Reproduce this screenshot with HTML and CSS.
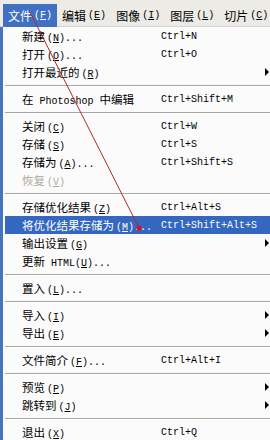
FILE: index.html
```html
<!DOCTYPE html>
<html lang="zh-CN">
<head>
    <meta charset="UTF-8">
    <title>文件菜单</title>
    <link rel="stylesheet" href="styles.css">
</head>
<body>
    <div class="menubar">
        <span class="top active">文件<span class="k">(<u>F</u>)</span></span>
        <span class="top">编辑<span class="k">(<u>E</u>)</span></span>
        <span class="top">图像<span class="k">(<u>I</u>)</span></span>
        <span class="top">图层<span class="k">(<u>L</u>)</span></span>
        <span class="top">切片<span class="k">(<u>C</u>)</span></span>
    </div>

    <div class="menu">
        <div class="row"><span class="label">新建<span class="k">(<u>N</u>)...</span></span><span class="key">Ctrl+N</span></div>
        <div class="row"><span class="label">打开<span class="k">(<u>O</u>)...</span></span><span class="key">Ctrl+O</span></div>
        <div class="row sub"><span class="label">打开最近的<span class="k">(<u>R</u>)</span></span></div>
        <div class="sep"></div>
        <div class="row"><span class="label">在<span class="k wide">Photoshop</span>中编辑</span><span class="key">Ctrl+Shift+M</span></div>
        <div class="sep"></div>
        <div class="row"><span class="label">关闭<span class="k">(<u>C</u>)</span></span><span class="key">Ctrl+W</span></div>
        <div class="row"><span class="label">存储<span class="k">(<u>S</u>)</span></span><span class="key">Ctrl+S</span></div>
        <div class="row"><span class="label">存储为<span class="k">(<u>A</u>)...</span></span><span class="key">Ctrl+Shift+S</span></div>
        <div class="row disabled"><span class="label">恢复<span class="k">(<u>V</u>)</span></span></div>
        <div class="sep"></div>
        <div class="row"><span class="label">存储优化结果<span class="k">(<u>Z</u>)</span></span><span class="key">Ctrl+Alt+S</span></div>
        <div class="row selected"><span class="label">将优化结果存储为<span class="k">(<u>M</u>)...</span></span><span class="key">Ctrl+Shift+Alt+S</span></div>
        <div class="row sub"><span class="label">输出设置<span class="k">(<u>G</u>)</span></span></div>
        <div class="row"><span class="label">更新<span class="k wide">HTML(<u>U</u>)...</span></span></div>
        <div class="sep"></div>
        <div class="row"><span class="label">置入<span class="k">(<u>L</u>)...</span></span></div>
        <div class="sep"></div>
        <div class="row sub"><span class="label">导入<span class="k">(<u>I</u>)</span></span></div>
        <div class="row sub"><span class="label">导出<span class="k">(<u>E</u>)</span></span></div>
        <div class="sep"></div>
        <div class="row"><span class="label">文件简介<span class="k">(<u>F</u>)...</span></span><span class="key">Ctrl+Alt+I</span></div>
        <div class="sep"></div>
        <div class="row sub"><span class="label">预览<span class="k">(<u>P</u>)</span></span></div>
        <div class="row sub"><span class="label">跳转到<span class="k">(<u>J</u>)</span></span></div>
        <div class="sep"></div>
        <div class="row"><span class="label">退出<span class="k">(<u>X</u>)</span></span><span class="key">Ctrl+Q</span></div>
    </div>

    <!-- hand drawn pointer over the screenshot -->
    <svg class="pointer" width="270" height="440" viewBox="0 0 270 440">
        <line x1="30" y1="12" x2="139" y2="228" stroke="#b02a2a" stroke-width="1"/>
        <circle cx="139" cy="228" r="2.5" fill="#e01010"/>
    </svg>
</body>
</html>
```

FILE: styles.css
```css
body {
    margin: 0;
    width: 270px;
    height: 440px;
    overflow: hidden;
    position: relative;
    background-color: #fbfbfb;
    font-family: "Noto Sans CJK SC", sans-serif;
    color: #000;
}

.menubar {
    display: flex;
    height: 27px;
    padding: 4px 0 0 3px;
    box-sizing: border-box;
    background-color: #ecebe6;
    border-bottom: 1px solid #d8d6cc;
    font-size: 12px;
}

.top {
    display: flex;
    align-items: center;
    height: 23px;
    padding: 0 5px;
    white-space: nowrap;
}

.top.active {
    background-color: #3f70c2;
    color: #fff;
}

/* mnemonic / latin parts use a half width monospace */
.k, .key {
    font-family: "Liberation Mono", monospace;
    font-size: 10px;
}

.k {
    margin-left: 2px;
}

.k.wide {
    margin: 0 6px;
}

.k u {
    text-underline-offset: 1px;
}

.menu {
    border-left: 3px solid #4674bd;
    padding-left: 2px;
    background-color: #fbfbfb;
}

.row {
    display: flex;
    align-items: center;
    height: 18px;
    padding-left: 17px;
    font-size: 11.5px;
    white-space: nowrap;
    position: relative;
}

.label {
    width: 139px;
    flex-shrink: 0;
}

.sub::after {
    content: "";
    position: absolute;
    right: 1px;
    top: 5px;
    border-left: 4px solid #000;
    border-top: 4px solid transparent;
    border-bottom: 4px solid transparent;
}

.selected {
    background-color: #3467c0;
    color: #fff;
}

.disabled {
    color: #aca899;
    text-shadow: 1px 1px 0 #fff;
}

.sep {
    height: 9px;
    display: flex;
    flex-direction: column;
    justify-content: center;
}

.sep::before {
    content: "";
    display: block;
    height: 1px;
    background-color: #a7a6a0;
    border-bottom: 1px solid #fff;
}

.pointer {
    position: absolute;
    left: 0;
    top: 0;
    pointer-events: none;
}
```
